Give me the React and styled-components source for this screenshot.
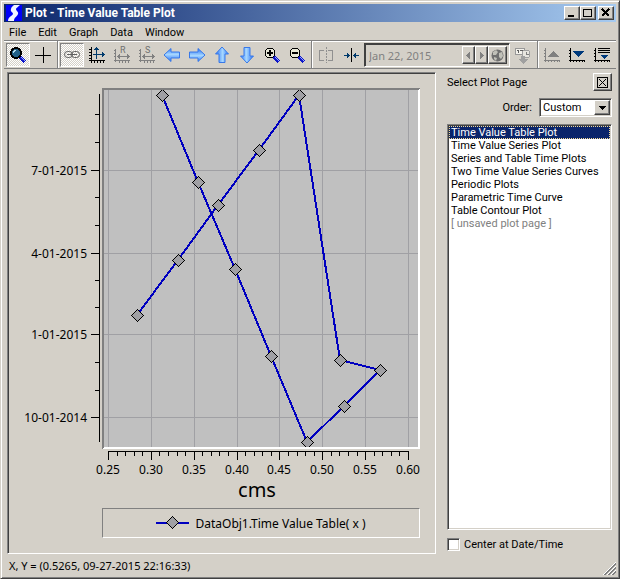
import React, { useState } from "react";
import styled, { createGlobalStyle, css } from "styled-components";

const GlobalStyle = createGlobalStyle`
  * {
    box-sizing: border-box;
  }
  body {
    margin: 0;
    background: #d4d0c8;
    color: #000;
    font: 11px/13px Roboto, "Noto Sans", sans-serif;
  }
  button, input, select {
    font: inherit;
    color: inherit;
    margin: 0;
    padding: 0;
  }
  svg {
    display: block;
  }
`;

/* numbers and dates are set a little wider than the ui text */
const wideFont = css`
  font-family: "Noto Sans", "Open Sans", sans-serif;
`;

/* classic bevels */
const raised = css`
  background: #d4d0c8;
  border: 1px solid;
  border-color: #fff #404040 #404040 #fff;
  box-shadow: inset -1px -1px #808080;
`;

const sunken = css`
  border: 1px solid;
  border-color: #808080 #fff #fff #808080;
  box-shadow: inset 1px 1px #404040, inset -1px -1px #d4d0c8;
`;

const Window = styled.div`
  display: flex;
  flex-direction: column;
  min-height: 100vh;
  padding: 3px;
  background: #d4d0c8;
  border: 1px solid;
  border-color: #d4d0c8 #404040 #404040 #d4d0c8;
  box-shadow: inset 1px 1px #fff, inset -1px -1px #808080;
`;

const TitleBar = styled.header`
  display: flex;
  align-items: center;
  height: 18px;
  padding: 0 2px;
  background: linear-gradient(to right, #0a246a, #a6caf0);
  color: #fff;
`;

const Title = styled.h1`
  flex: 1;
  margin: 0 0 0 3px;
  font-size: 12px;
  font-weight: 700;
`;

const CaptionButton = styled.button`
  ${raised}
  display: grid;
  place-items: center;
  width: 16px;
  height: 14px;
  margin-left: ${(p) => (p.$apart ? 2 : 0)}px;
`;

const MenuBar = styled.nav`
  display: flex;
  align-items: center;
  gap: 12px;
  height: 18px;
  padding: 2px 5px 0;
`;

const MenuItem = styled.button`
  border: 0;
  background: none;
`;

const ToolBar = styled.div`
  display: flex;
  height: 29px;
  border-top: 1px solid #808080;
  border-bottom: 1px solid #808080;
  box-shadow: inset 0 1px #fff;
`;

const ToolGroup = styled.div`
  display: flex;
  align-items: center;
  gap: 1px;
  padding: 1px 2px 0;

  & + & {
    border-left: 1px solid #808080;
    box-shadow: inset 1px 1px #fff;
  }
`;

const ToolButton = styled.button`
  display: grid;
  place-items: center;
  width: 24px;
  height: 24px;
  border: 1px solid transparent;
  background: none;

  ${(p) =>
    p.$pressed &&
    css`
      border-color: #808080 #fff #fff #808080;
      background: repeating-conic-gradient(#fff 0 25%, #d4d0c8 0 50%) 0 0 / 2px 2px;
    `}
`;

const DateBox = styled.div`
  ${sunken}
  display: flex;
  width: 146px;
  height: 24px;
  padding: 2px;
  border-color: #404040 #fff #fff #404040;
`;

const DateInput = styled.input`
  ${wideFont}
  flex: 1;
  min-width: 0;
  padding-left: 2px;
  border: 0;
  background: none;

  &:disabled {
    color: #808080;
  }
`;

const DateButton = styled.button`
  ${raised}
  display: grid;
  place-items: center;
  width: ${(p) => (p.$wide ? 19 : 13)}px;
`;

const Main = styled.main`
  display: flex;
  flex: 1;
  padding: 3px 0 0 3px;
`;

const ChartPanel = styled.section`
  ${sunken}
  flex: 1;
  min-width: 0;
  padding: 1px 0 0 1px;
`;

const Legend = styled.div`
  ${wideFont}
  display: flex;
  align-items: center;
  justify-content: center;
  gap: 6px;
  height: 30px;
  margin: 4px 15px 0 93px;
  border: 1px solid;
  border-color: #808080 #fff #fff #808080;
  font-size: 12px;
`;

const SidePanel = styled.aside`
  display: flex;
  flex-direction: column;
  width: 180px;
  padding: 1px 4px 3px 11px;
`;

const SideHeader = styled.div`
  display: flex;
  align-items: center;
  justify-content: space-between;
  height: 18px;
`;

const PanelTitle = styled.h2`
  margin: 0;
  font-size: 11px;
  font-weight: 400;
`;

const CloseButton = styled.button`
  ${raised}
  display: grid;
  place-items: center;
  width: 19px;
  height: 18px;
`;

const OrderRow = styled.div`
  display: flex;
  align-items: center;
  justify-content: flex-end;
  gap: 7px;
  margin: 7px 0;
`;

const SelectBox = styled.div`
  ${sunken}
  display: grid;
  grid-template-columns: 1fr 16px;
  width: 73px;
  height: 19px;
  padding: 1px;
  background: #fff;
`;

const OrderSelect = styled.select`
  grid-area: 1 / 1 / 2 / 3;
  appearance: none;
  padding-left: 2px;
  border: 0;
  background: none;
`;

const SelectArrow = styled.span`
  ${raised}
  grid-area: 1 / 2;
  display: grid;
  place-items: center;
  pointer-events: none;
`;

const PageList = styled.ul`
  ${sunken}
  flex: 1;
  margin: 0;
  padding: 1px;
  background: #fff;
  list-style: none;
`;

const PageItem = styled.button`
  display: block;
  width: 100%;
  height: 13px;
  padding: 0 2px;
  border: 0;
  background: none;
  color: ${(p) => (p.$unsaved ? "#808080" : "#000")};
  line-height: 13px;
  text-align: left;
  white-space: nowrap;

  ${(p) =>
    p.$selected &&
    css`
      background: #0a246a;
      color: #fff;
      outline: 1px dotted #f5db95;
      outline-offset: -1px;
    `}
`;

const CheckLabel = styled.label`
  display: flex;
  align-items: center;
  gap: 4px;
  margin-top: 8px;
`;

const CheckBox = styled.input`
  ${sunken}
  appearance: none;
  width: 13px;
  height: 13px;
  background: #fff;

  &:checked {
    background: radial-gradient(#000 3px, #fff 4px);
  }
`;

const StatusBar = styled.footer`
  display: flex;
  align-items: flex-end;
  justify-content: space-between;
  height: 21px;
  padding-left: 5px;
`;

const StatusText = styled.span`
  ${wideFont}
  padding-bottom: 3px;
`;

/* ---- icons ---- */

const Icon = ({ size = 18, children }) => (
  <svg width={size} height={size} viewBox={`0 0 ${size} ${size}`} fill="none" shapeRendering="crispEdges" aria-hidden="true">
    {children}
  </svg>
);

const AppIcon = () => (
  <svg width="16" height="16" viewBox="0 0 16 16" aria-hidden="true">
    <path d="M0 0h16v16H0z" fill="#0000f8" />
    <path d="M8 0h6c-2 2-4 3-4 4 0 2 3 3 2 5-1 3-4 3-4 7H2c0-4 4-5 5-7 0-2-3-2-2-5 0-2 2-3 3-4z" fill="#f0f4ff" />
  </svg>
);

const Magnifier = ({ lens, sign }) => (
  <Icon>
    <path d="M10 10l6 6" stroke="#000" strokeWidth="4" />
    <path d="M11 11l5 5" stroke="#1018c8" strokeWidth="3" />
    <path d="M12 11l4 4" stroke="#98a8ff" />
    <circle cx="7" cy="7" r="5" fill={lens} stroke="#000" strokeWidth={sign ? 1 : 2} />
    {sign ? <path d={sign} stroke="#000" strokeWidth="2" /> : <path d="M4 7V5h1V4h2" stroke="#b8e0f0" />}
  </Icon>
);

const CrossIcon = () => (
  <Icon>
    <path d="M1 9.5h16M9.5 1v16" stroke="#000" />
  </Icon>
);

const ChainIcon = () => (
  <svg width="18" height="18" viewBox="0 0 18 18" fill="none" stroke="#606060" aria-hidden="true">
    <rect x="1.5" y="5.5" width="8" height="6" rx="3" />
    <rect x="8.5" y="5.5" width="8" height="6" rx="3" />
    <path d="M4 8.5h10" />
  </svg>
);

const AxesIcon = () => (
  <Icon>
    <path d="M3.5 1v16M1 14.5h16" stroke="#000" />
    <path d="M1 3.5h2M1 6.5h2M1 9.5h2M1 12.5h2M6.5 15v2M9.5 15v2M12.5 15v2M15.5 15v2" stroke="#000" />
    <path d="M8.5 2v11M5 8.5h11" stroke="#003a6c" />
    <path d="M8 1h1v1h1v1h1v1H6V3h1V2h1zM16 8h1v1h-1v1h-1v1h-1V6h1v1h1z" fill="#003a6c" />
  </Icon>
);

const LetterAxesIcon = ({ children }) => (
  <svg width="18" height="22" viewBox="0 -2 18 22" fill="none" shapeRendering="crispEdges" aria-hidden="true">
    <path d="M2.5 3v13M1 14.5h16" stroke="#808080" />
    <path d="M1 4.5h1M1 7.5h1M1 10.5h1M6.5 15v2M9.5 15v2M12.5 15v2M15.5 15v2" stroke="#808080" />
    <path d="M4 10.5h12" stroke="#808080" />
    <path d="M4 10.5l3-3v6zM17 10.5l-3-3v6z" fill="#808080" />
    <text x="7" y="7" fontSize="9" fill="#707070">{children}</text>
  </svg>
);

const ArrowIcon = ({ turn }) => (
  <svg width="18" height="18" viewBox="0 0 18 18" aria-hidden="true">
    <defs>
      <linearGradient id={`arrow${turn}`} x1="0" y1="0" x2="0" y2="1">
        <stop offset="0" stopColor="#2c7cff" />
        <stop offset="0.45" stopColor="#a8d8ff" />
        <stop offset="1" stopColor="#2470f8" />
      </linearGradient>
    </defs>
    <path
      d="M1 9l7-6.5v3.500h8.500v6H8v3.500z"
      transform={`rotate(${turn} 9 9)`}
      fill={`url(#arrow${turn})`}
      stroke="#3878e8"
      strokeLinejoin="round"
    />
  </svg>
);

const MirrorIcon = () => (
  <Icon>
    <path d="M7 4.500H2.500v10H7M11 4.500h4.500v10H11" stroke="#909090" />
    <path d="M9.500 1v16" stroke="#909090" strokeDasharray="2 1" />
  </Icon>
);

const SqueezeIcon = () => (
  <Icon>
    <path d="M9.500 2v14" stroke="#000" />
    <path d="M2 9.500h5M12 9.500h5" stroke="#003a6c" />
    <path d="M8 9.500l-3-3v6zM11 9.500l3-3v6z" fill="#003a6c" />
  </Icon>
);

const GlobeIcon = () => (
  <svg width="13" height="13" viewBox="0 0 13 13" aria-hidden="true">
    <circle cx="6.500" cy="6.500" r="6" fill="#707070" />
    <path d="M2 3l3-2 2 2-2 3-3 0zM8 4l3-1 1 4-2 3-2-2zM3 8l3 1-1 3-2-2z" fill="#c0c0b8" />
  </svg>
);

const CalendarIcon = () => (
  <Icon>
    <path d="M1.500 2.500h9v6h-9z" fill="#f4f2ec" stroke="#989898" />
    <path d="M4.500 4v3M3 4.500h1M6 4.500h3M8.500 5v2" stroke="#606060" />
    <circle cx="12" cy="8" r="4" fill="#e8e6e0" stroke="#a0a0a0" />
    <path d="M12.500 6v2H15" stroke="#808080" />
    <path d="M7 10h4v3h3l-5 5-5-5h3z" fill="#a0a0a0" />
  </Icon>
);

const CornerIcon = ({ color, d, lines }) => (
  <Icon>
    <path d="M2.500 2v14M1 14.500h16" stroke={color} />
    <path d="M1 4.500h1M1 7.500h1M1 10.500h1M5.500 15v1M8.500 15v1M11.500 15v1M14.500 15v1M16.500 15v1" stroke={color} />
    {lines && <path d="M5 2.500h12M5 4.500h12M5 6.500h12" stroke="#000" />}
    <path d={d} fill={color === "#000" ? "#003a7c" : "#808080"} />
  </Icon>
);

const Grip = () => (
  <svg width="13" height="13" viewBox="0 0 13 13" aria-hidden="true">
    <path d="M0 13L13 0M4 13L13 4M8 13L13 8" stroke="#fff" />
    <path d="M1 13L13 1M2 13L13 2M5 13L13 5M6 13L13 6M9 13L13 9M10 13L13 10" stroke="#808080" />
  </svg>
);

/* ---- chart ---- */

const points = [
  [153, 21], [189, 108], [226, 195], [262, 282], [298, 368], [335, 332], [371, 296],
  [331, 286], [290, 21], [250, 76], [209, 131], [169, 186], [128, 241],
];

const xLabels = ["0.25", "0.30", "0.35", "0.40", "0.45", "0.50", "0.55", "0.60"];
const dates = [
  { label: "7-01-2015", y: 96 },
  { label: "4-01-2015", y: 179 },
  { label: "1-01-2015", y: 260 },
  { label: "10-01-2014", y: 343 },
];
const minorY = [40, 68, 123, 151, 206, 233, 288, 316];

const xAt = (i) => Math.round(99 + (i * 300) / 35);

const Marker = ({ x, y }) => (
  <path
    d={`M${x - 5.5} ${y + 0.5}l6 -6l6 6l-6 6z`}
    fill="#a0a0a4"
    stroke="#000"
  />
);

const ChartSvg = styled.svg`
  ${wideFont}
  width: 100%;
  height: auto;
  font-size: 12px;
`;

const Chart = () => (
  <ChartSvg viewBox="0 0 426 430" role="img" aria-label="Time value table plot">
    <clipPath id="plot-area">
      <path d="M95 16h314v357H95z" />
    </clipPath>
    <g shapeRendering="crispEdges">
      <path d="M93 14h318v361H93z" fill="#fff" />
      <path d="M93 14h318l-2 2v357H95l-2 2z" fill="#808080" />
      <path d="M95 16h314v357H95z" fill="#c0c0c0" />
      {xLabels.map((label, i) => (
        <path key={label} d={`M${xAt(i * 5) + 0.5} 16v357`} stroke="#a0a0a4" />
      ))}
      {dates.map(({ label, y }) => (
        <path key={label} d={`M95 ${y + 0.5}h314`} stroke="#a0a0a4" />
      ))}
      <path d="M90.500 20v348M99 377.500h301" stroke="#000" />
      {minorY.map((y) => (
        <path key={y} d={`M86 ${y + 0.5}h4`} stroke="#000" />
      ))}
      {dates.map(({ label, y }) => (
        <path key={label} d={`M82 ${y + 0.5}h8`} stroke="#000" />
      ))}
      {Array.from({ length: 36 }, (_, i) => (
        <path key={i} d={`M${xAt(i) + 0.5} 378v${i % 5 ? 4 : 8}`} stroke="#000" />
      ))}
    </g>
    <g clipPath="url(#plot-area)" shapeRendering="crispEdges">
      <polyline points={points.join(" ")} fill="none" stroke="#0000c0" strokeWidth="2" />
      {points.map(([x, y]) => (
        <Marker key={`${x}-${y}`} x={x} y={y} />
      ))}
    </g>
    {dates.map(({ label, y }) => (
      <text key={label} x="78" y={y + 5} textAnchor="end">{label}</text>
    ))}
    {xLabels.map((label, i) => (
      <text key={label} x={xAt(i * 5)} y="400" textAnchor="middle">{label}</text>
    ))}
    <text x="248" y="423" textAnchor="middle" fontSize="20">cms</text>
  </ChartSvg>
);

const menus = ["File", "Edit", "Graph", "Data", "Window"];

const pages = [
  "Time Value Table Plot",
  "Time Value Series Plot",
  "Series and Table Time Plots",
  "Two Time Value Series Curves",
  "Periodic Plots",
  "Parametric Time Curve",
  "Table Contour Plot",
  "[ unsaved plot page ]",
];

const App = () => {
  const [page, setPage] = useState(pages[0]);
  const [zoomMode, setZoomMode] = useState(true);
  const [linked, setLinked] = useState(true);

  return (
    <>
      <GlobalStyle />
      <Window>
        <TitleBar>
          <AppIcon />
          <Title>Plot - Time Value Table Plot</Title>
          <CaptionButton aria-label="Minimize">
            <Icon size={10}><path d="M1 8h6" stroke="#000" strokeWidth="2" /></Icon>
          </CaptionButton>
          <CaptionButton aria-label="Maximize">
            <Icon size={10}><path d="M.5 1.500h8v7h-8zM0 1h9" stroke="#000" /></Icon>
          </CaptionButton>
          <CaptionButton $apart aria-label="Close">
            <Icon size={10}><path d="M1 1l7 7M8 1l-7 7" stroke="#000" strokeWidth="2" /></Icon>
          </CaptionButton>
        </TitleBar>

        <MenuBar>
          {menus.map((m) => (
            <MenuItem key={m}>{m}</MenuItem>
          ))}
        </MenuBar>

        <ToolBar>
          <ToolGroup>
            <ToolButton $pressed={zoomMode} onClick={() => setZoomMode(true)} aria-label="Zoom mode">
              <Magnifier lens="#206088" />
            </ToolButton>
            <ToolButton $pressed={!zoomMode} onClick={() => setZoomMode(false)} aria-label="Crosshair">
              <CrossIcon />
            </ToolButton>
          </ToolGroup>
          <ToolGroup>
            <ToolButton $pressed={linked} onClick={() => setLinked(!linked)} aria-label="Link axes">
              <ChainIcon />
            </ToolButton>
            <ToolButton aria-label="Scale axes"><AxesIcon /></ToolButton>
            <ToolButton disabled aria-label="Reset range"><LetterAxesIcon>R</LetterAxesIcon></ToolButton>
            <ToolButton disabled aria-label="Save range"><LetterAxesIcon>S</LetterAxesIcon></ToolButton>
            <ToolButton aria-label="Left"><ArrowIcon turn={0} /></ToolButton>
            <ToolButton aria-label="Right"><ArrowIcon turn={180} /></ToolButton>
            <ToolButton aria-label="Up"><ArrowIcon turn={90} /></ToolButton>
            <ToolButton aria-label="Down"><ArrowIcon turn={270} /></ToolButton>
            <ToolButton aria-label="Zoom in"><Magnifier lens="#e8e8d8" sign="M4 7h6M7 4v6" /></ToolButton>
            <ToolButton aria-label="Zoom out"><Magnifier lens="#e8e8d8" sign="M4 7h6" /></ToolButton>
          </ToolGroup>
          <ToolGroup>
            <ToolButton disabled aria-label="Split"><MirrorIcon /></ToolButton>
            <ToolButton aria-label="Center"><SqueezeIcon /></ToolButton>
            <DateBox>
              <DateInput disabled defaultValue="Jan 22, 2015" aria-label="Date" />
              <DateButton disabled aria-label="Previous date">
                <Icon size={7}><path d="M5 0v7L1 3.500z" fill="#808080" /></Icon>
              </DateButton>
              <DateButton disabled aria-label="Next date">
                <Icon size={7}><path d="M2 0v7l4-3.500z" fill="#808080" /></Icon>
              </DateButton>
              <DateButton $wide disabled aria-label="Time zone"><GlobeIcon /></DateButton>
            </DateBox>
            <ToolButton disabled aria-label="Apply date"><CalendarIcon /></ToolButton>
          </ToolGroup>
          <ToolGroup>
            <ToolButton disabled aria-label="Page up"><CornerIcon color="#808080" d="M10 5l6 6H4z" /></ToolButton>
            <ToolButton aria-label="Page down"><CornerIcon color="#000" d="M5 5h11l-5.500 6z" /></ToolButton>
            <ToolButton aria-label="Page list"><CornerIcon color="#000" lines d="M7 9h8l-4 4z" /></ToolButton>
          </ToolGroup>
        </ToolBar>

        <Main>
          <ChartPanel>
            <Chart />
            <Legend>
              <svg width="33" height="14" viewBox="0 0 33 14" shapeRendering="crispEdges" aria-hidden="true">
                <path d="M0 7h33" stroke="#0000c0" strokeWidth="2" />
                <Marker x={16} y={6} />
              </svg>
              DataObj1.Time Value Table( x )
            </Legend>
          </ChartPanel>

          <SidePanel>
            <SideHeader>
              <PanelTitle>Select Plot Page</PanelTitle>
              <CloseButton aria-label="Close panel">
                <Icon size={11}><path d="M.5.5h10v10H.5zM2 2l7 7M9 2L2 9" stroke="#000" /></Icon>
              </CloseButton>
            </SideHeader>
            <OrderRow>
              <label htmlFor="order">Order:</label>
              <SelectBox>
                <OrderSelect id="order" defaultValue="Custom">
                  <option>Custom</option>
                  <option>Name</option>
                </OrderSelect>
                <SelectArrow>
                  <Icon size={7}><path d="M0 2h7L3.500 6z" fill="#000" /></Icon>
                </SelectArrow>
              </SelectBox>
            </OrderRow>
            <PageList>
              {pages.map((name) => (
                <li key={name}>
                  <PageItem
                    $selected={name === page}
                    $unsaved={name.startsWith("[")}
                    onClick={() => setPage(name)}
                  >
                    {name}
                  </PageItem>
                </li>
              ))}
            </PageList>
            <CheckLabel>
              <CheckBox type="checkbox" />
              Center at Date/Time
            </CheckLabel>
          </SidePanel>
        </Main>

        <StatusBar>
          <StatusText>X, Y = (0.5265, 09-27-2015 22:16:33)</StatusText>
          <Grip />
        </StatusBar>
      </Window>
    </>
  );
};

export default App;
